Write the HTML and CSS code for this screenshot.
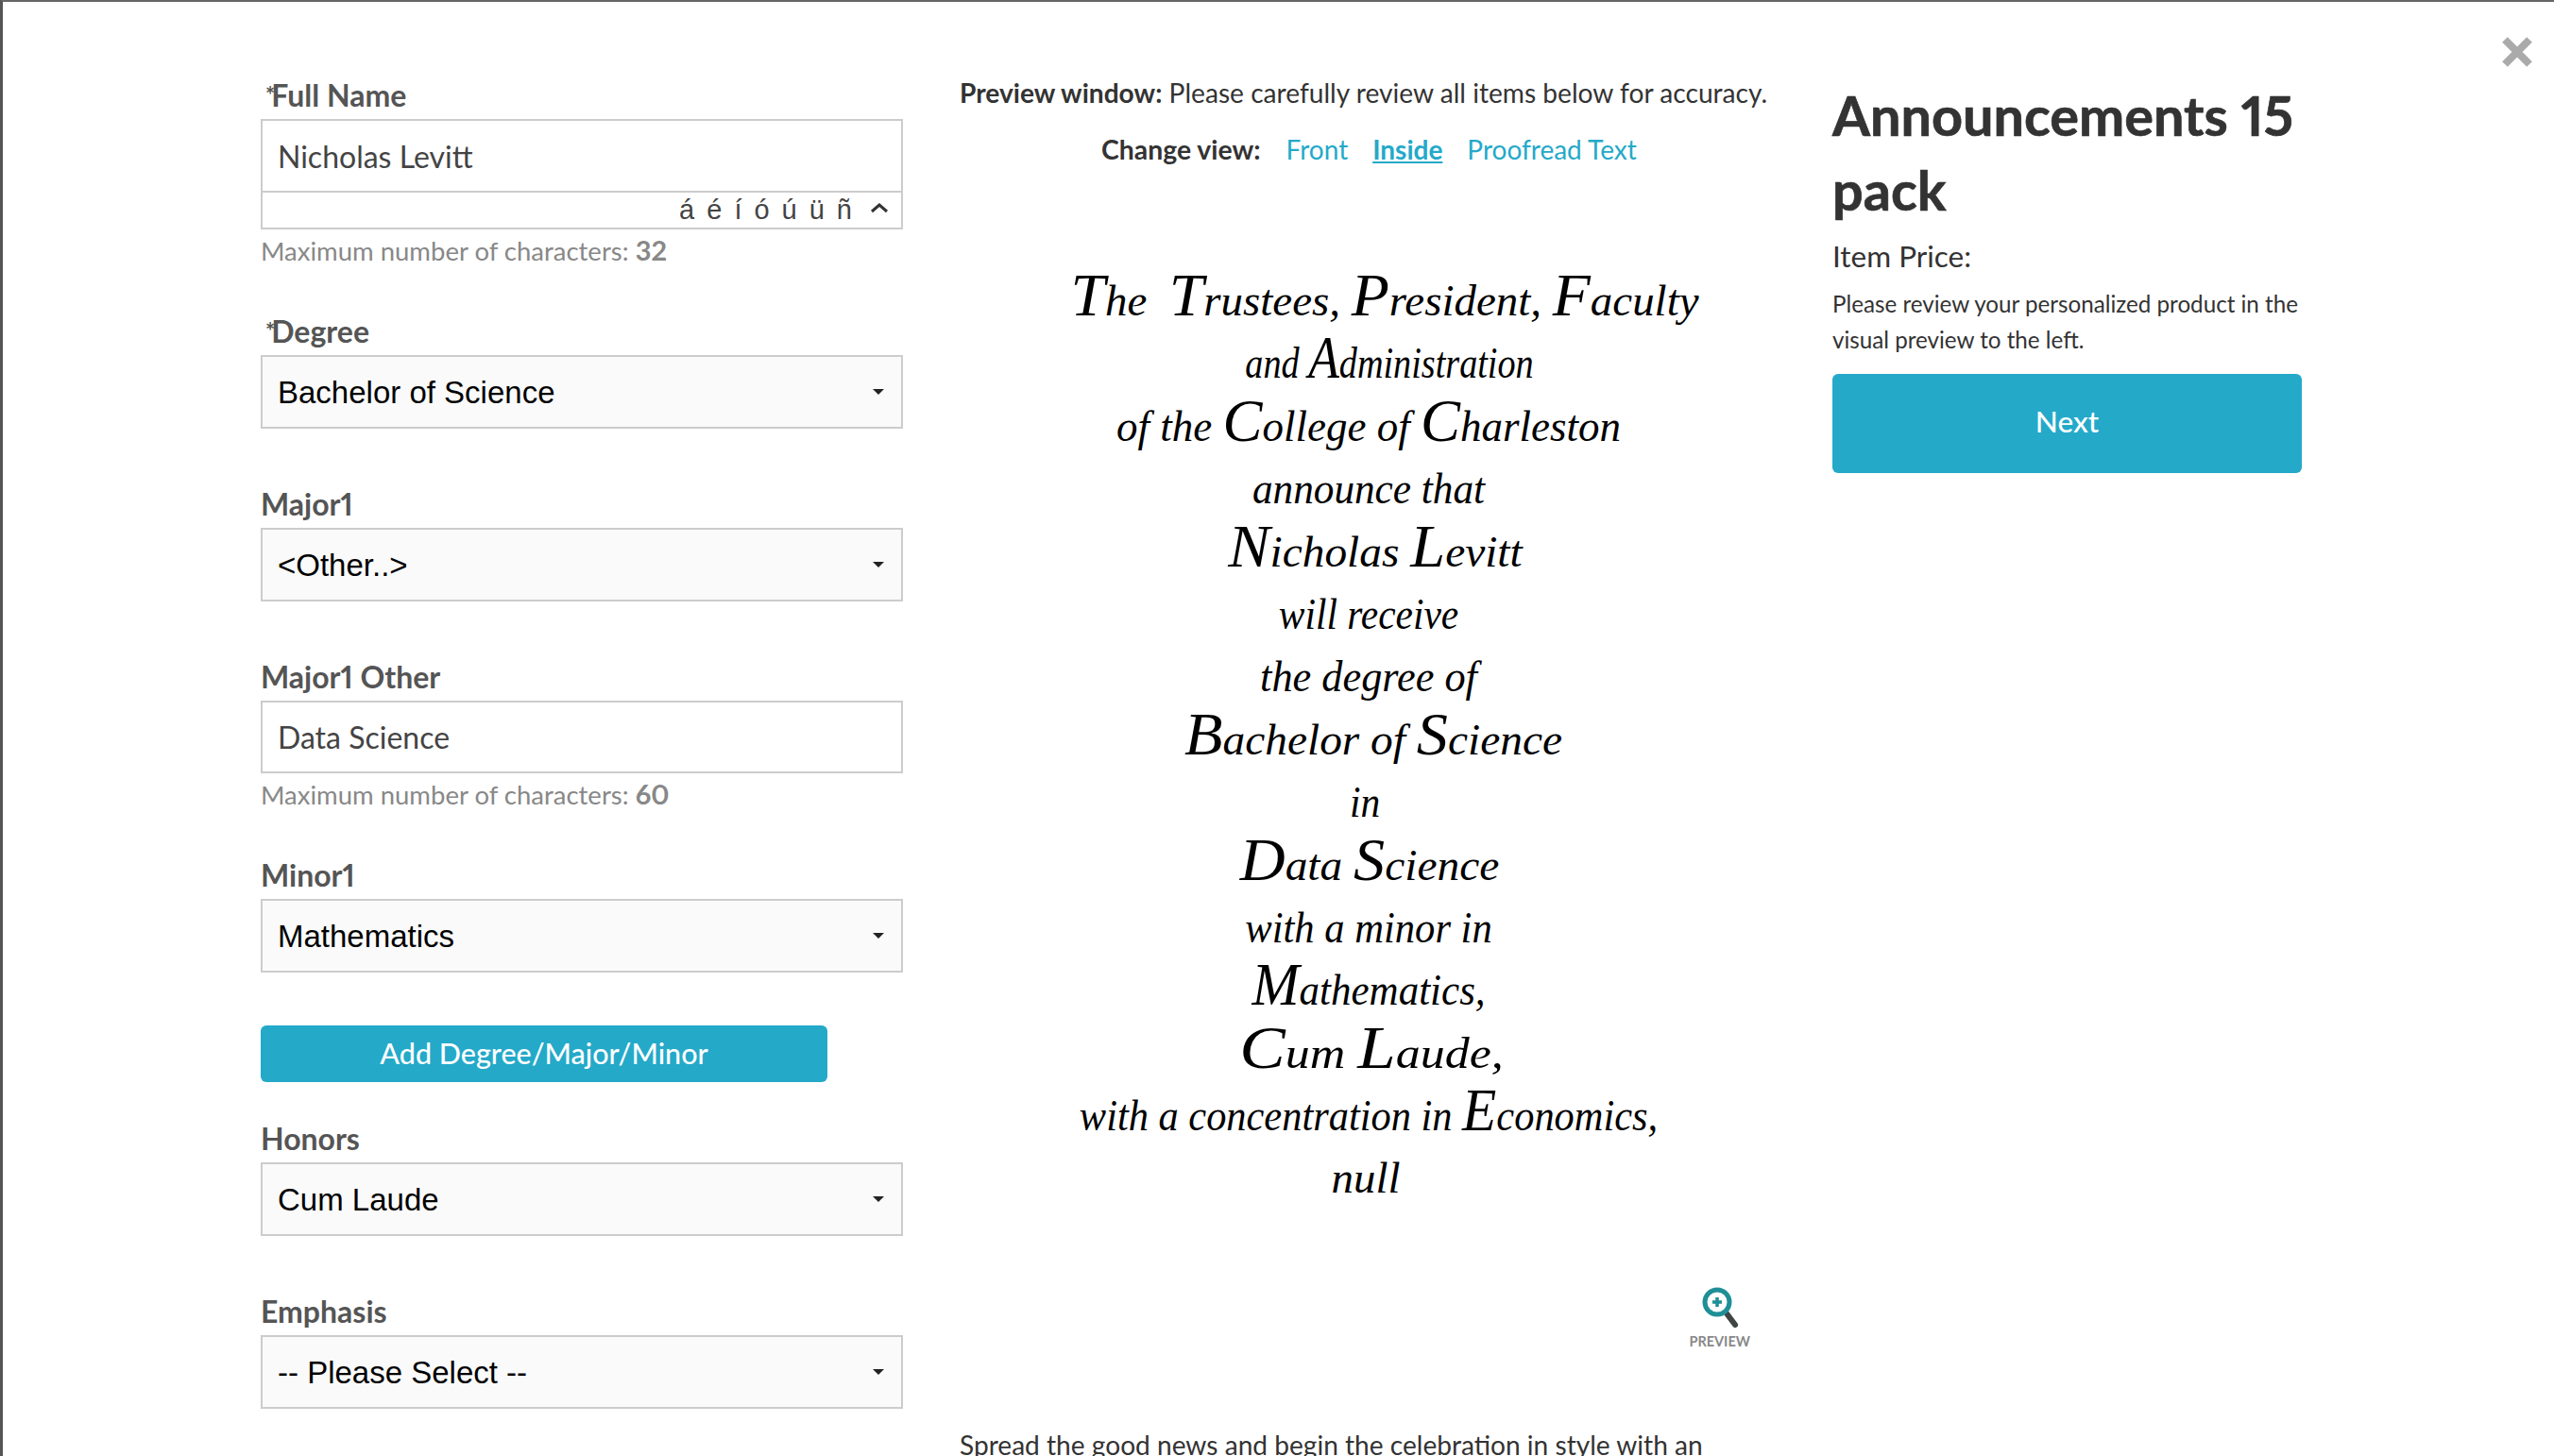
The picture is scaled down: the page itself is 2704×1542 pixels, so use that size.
FILE: index.html
```html
<!DOCTYPE html>
<html lang="en">
<head>
<meta charset="utf-8">
<title>Announcements 15 pack</title>
<link rel="stylesheet" href="styles.css">
</head>
<body>
<div class="modal">
  <button class="close" type="button" aria-label="Close">
    <svg viewBox="0 0 32 34" width="32" height="34"><path d="M3 4 L29 30 M29 4 L3 30" fill="none" stroke="#aaaaaa" stroke-width="8"/></svg>
  </button>
  <form class="form-col">
    <div class="field">
      <label class="label"><span class="req">*</span>Full Name</label>
      <input class="text-input joined" type="text" value="Nicholas Levitt">
      <div class="accents">
        <span>á</span><span>é</span><span>í</span><span>ó</span><span>ú</span><span>ü</span><span>ñ</span>
        <svg class="chev" viewBox="0 0 20 12" width="20" height="12"><path d="M2 10 L10 3 L18 10" fill="none" stroke="#333" stroke-width="3"/></svg>
      </div>
      <p class="help">Maximum number of characters: <b>32</b></p>
    </div>
    <div class="field">
      <label class="label"><span class="req">*</span>Degree</label>
      <div class="select-wrap"><select class="select"><option>Bachelor of Science</option></select></div>
    </div>
    <div class="field">
      <label class="label">Major1</label>
      <div class="select-wrap"><select class="select"><option>&lt;Other..&gt;</option></select></div>
    </div>
    <div class="field">
      <label class="label">Major1 Other</label>
      <input class="text-input" type="text" value="Data Science">
      <p class="help">Maximum number of characters: <b>60</b></p>
    </div>
    <div class="field field-tight">
      <label class="label">Minor1</label>
      <div class="select-wrap"><select class="select"><option>Mathematics</option></select></div>
    </div>
    <button class="btn add-btn" type="button">Add Degree/Major/Minor</button>
    <div class="field">
      <label class="label">Honors</label>
      <div class="select-wrap"><select class="select"><option>Cum Laude</option></select></div>
    </div>
    <div class="field">
      <label class="label">Emphasis</label>
      <div class="select-wrap"><select class="select"><option>-- Please Select --</option></select></div>
    </div>
  </form>

  <section class="preview-col">
    <p class="preview-note"><b>Preview window:</b> Please carefully review all items below for accuracy.</p>
    <nav class="views">
      <b class="views-label">Change view:</b>
      <a class="view-link" href="#">Front</a>
      <a class="view-link active" href="#">Inside</a>
      <a class="view-link" href="#">Proofread Text</a>
    </nav>
    <div class="card">
      <div class="script-line l1"><span class="cap">T</span>he &nbsp;<span class="cap">T</span>rustees, <span class="cap">P</span>resident, <span class="cap">F</span>aculty</div>
      <div class="script-line l2">and <span class="cap">A</span>dministration</div>
      <div class="script-line l3">of the <span class="cap">C</span>ollege of <span class="cap">C</span>harleston</div>
      <div class="script-line l4">announce that</div>
      <div class="script-line l5"><span class="cap">N</span>icholas <span class="cap">L</span>evitt</div>
      <div class="script-line l6">will receive</div>
      <div class="script-line l7">the degree of</div>
      <div class="script-line l8"><span class="cap">B</span>achelor of <span class="cap">S</span>cience</div>
      <div class="script-line l9">in</div>
      <div class="script-line l10"><span class="cap">D</span>ata <span class="cap">S</span>cience</div>
      <div class="script-line l11">with a minor in</div>
      <div class="script-line l12"><span class="cap">M</span>athematics,</div>
      <div class="script-line l13"><span class="cap">C</span>um <span class="cap">L</span>aude,</div>
      <div class="script-line l14">with a concentration in <span class="cap">E</span>conomics,</div>
      <div class="script-line l15">null</div>
    </div>
    <div class="zoom-row">
      <div class="zoom">
        <svg viewBox="0 0 40 46" width="40" height="46">
          <path d="M27 29 L36 41" stroke="#3f4445" stroke-width="6" stroke-linecap="round" fill="none"/>
          <circle cx="17" cy="17" r="13" fill="#fff" stroke="#1f8f97" stroke-width="5"/>
          <path d="M17 12 V22 M12 17 H22" stroke="#1f8f97" stroke-width="3.5" fill="none"/>
        </svg>
        <span class="zoom-label">PREVIEW</span>
      </div>
    </div>
    <p class="desc">Spread the good news and begin the celebration in style with an</p>
  </section>

  <aside class="detail-col">
    <h1 class="title">Announcements 15 pack</h1>
    <p class="price">Item Price:</p>
    <p class="note">Please review your personalized product in the visual preview to the left.</p>
    <button class="btn next-btn" type="button">Next</button>
  </aside>
</div>
</body>
</html>
```
FILE: styles.css
```css
* { box-sizing: border-box; }
html, body { margin: 0; height: 100%; overflow: hidden; background: #fff; }
body { font-family: Lato, "Open Sans", sans-serif; color: #333; font-variant-numeric: proportional-nums; }

.modal {
  position: relative;
  display: flex;
  height: 1542px;
  overflow: hidden;
  padding: 79px 0 0 273px;
  border-top: 2px solid #666;
  border-left: 3px solid #555;
  background: #fff;
}
.modal::before {
  content: "";
  position: absolute;
  top: 138px;
  bottom: 0;
  left: -3px;
  width: 3px;
  background: #2a1218;
}

.close {
  position: absolute;
  top: 36px;
  right: 23px;
  padding: 0;
  border: 0;
  background: none;
  line-height: 0;
}

/* Form column */
.form-col { width: 680px; flex: none; }
.field { margin-bottom: 60px; }
.field-tight { margin-bottom: 56px; }
.label {
  display: block;
  height: 40px;
  margin-bottom: 5px;
  font-size: 32px;
  line-height: 40px;
  font-weight: 700;
  color: #555;
}
.req { font-size: 24px; margin-left: 5px; margin-right: -4px; vertical-align: 3px; }
.text-input {
  display: block;
  width: 100%;
  height: 77px;
  padding: 0 16px;
  border: 2px solid #ccc;
  background: #fff;
  font: 400 32px Lato, sans-serif;
  color: #444;
  outline: none;
}
.text-input.joined { height: 78px; }
.accents {
  display: flex;
  justify-content: flex-end;
  align-items: center;
  gap: 13px;
  height: 41px;
  margin-top: -2px;
  padding-right: 13px;
  border: 2px solid #ccc;
  font: 400 29px "Liberation Sans", sans-serif;
  color: #444;
}
.chev { margin-left: 6px; margin-bottom: 6px; }
.help {
  margin: 2px 0 -20px;
  height: 46px;
  font-size: 27.5px;
  line-height: 40px;
  color: #888;
}
.help b { font-size: 29px; color: #888; }
.select-wrap { position: relative; }
.select-wrap::after {
  content: "";
  position: absolute;
  top: 36px;
  right: 20px;
  border-left: 6px solid transparent;
  border-right: 6px solid transparent;
  border-top: 6px solid #222;
  pointer-events: none;
}
.select {
  display: block;
  width: 100%;
  height: 78px;
  padding: 0 40px 0 16px;
  border: 2px solid #ccc;
  border-radius: 0;
  background: #fafafa;
  appearance: none;
  font: 400 33px "Liberation Sans", sans-serif;
  color: #000;
  outline: none;
}

.btn {
  display: block;
  border: 0;
  border-radius: 6px;
  background: #24a9c9;
  color: #fff;
  font-family: Lato, sans-serif;
  font-weight: 500;
}
.add-btn { width: 600px; height: 60px; margin-bottom: 40px; padding: 0 0 3px; font-size: 30.5px; }

/* Preview column */
.preview-col { width: 864px; flex: none; margin-left: 60px; margin-top: -1px; }
.preview-note { margin: 0; font-size: 28.15px; line-height: 36px; color: #333; white-space: nowrap; }
.views {
  display: flex;
  align-items: center;
  height: 36px;
  margin-top: 24px;
  padding-left: 150px;
  font-size: 28px;
}
.views-label { margin-right: 27px; font-size: 28.4px; color: #333; }
.view-link { margin-right: 26px; color: #24a9c9; text-decoration: none; }
.view-link.active { font-weight: 700; text-decoration: underline; }

.card { width: 866px; margin-top: 110px; }
.script-line {
  height: 66.4px;
  text-align: center;
  font: italic 400 46px/66px "Liberation Serif", serif;
  color: #000;
  white-space: nowrap;
}
.cap { font-size: 1.4em; line-height: 0; }
.l1 { transform: translateX(17px) scaleX(1.02); }
.l2 { transform: translateX(22px) scaleX(.83); }
.l3 { transform: scaleX(.978); }
.l4 { transform: scaleX(.94); }
.l5 { transform: translateX(7px) scaleX(1.03); }
.l6 { transform: scaleX(.9); }
.l7 { transform: scaleX(.964); }
.l8 { transform: translateX(5px) scaleX(1.03); }
.l9 { transform: translateX(-4px) scaleX(.9); }
.l10 { transform: translateX(1px) scaleX(1.03); }
.l11 { transform: scaleX(.926); }
.l12 { transform: scaleX(.935); }
.l13 { transform: translateX(3px) scaleX(1.13); }
.l14 { transform: scaleX(.922); }
.l15 { transform: translateX(-3px) scaleX(1.02); }

.zoom-row { display: flex; justify-content: flex-end; margin-top: 80px; padding-right: 27px; }
.zoom { display: flex; flex-direction: column; align-items: center; }
.zoom-label { font-size: 14.5px; line-height: 16px; font-weight: 700; color: #888; margin-top: 5px; }
.desc { margin: 83px 0 0; font-size: 28.1px; line-height: 36px; color: #333; white-space: nowrap; }

/* Detail column */
.detail-col { width: 497px; flex: none; margin-left: 60px; margin-top: 1px; }
.title { margin: 0; font-size: 57.6px; line-height: 79px; font-weight: 700; color: #333; -webkit-text-stroke: .7px #333; }
.price { margin: 11px 0 0; font-size: 31.5px; line-height: 40px; color: #333; }
.note { margin: 12px 0 0; font-size: 24.2px; line-height: 38px; color: #333; }
.next-btn { width: 497px; height: 105px; margin-top: 17px; padding: 0 0 5px; font-size: 31.5px; }
```
